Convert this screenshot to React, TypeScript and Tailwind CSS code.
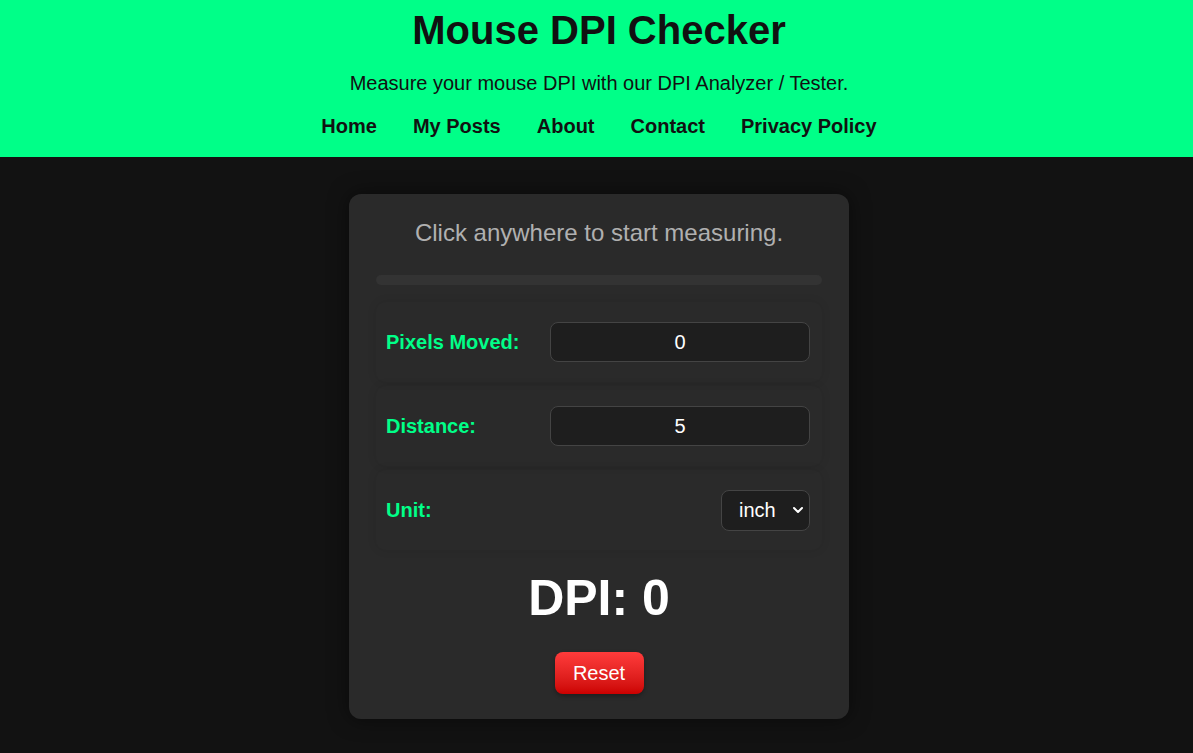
import { useState } from "react";

const font = { fontFamily: '"Liberation Sans", Arial, sans-serif' };

const navLinks = ["Home", "My Posts", "About", "Contact", "Privacy Policy"];

function Row({ label, children }: { label: string; children: React.ReactNode }) {
  return (
    <div className="flex items-center justify-between h-[80px] pl-[10px] pr-[12px] rounded-[10px] shadow-[0_0_10px_rgba(0,0,0,0.1)]">
      <span className="text-[20px] font-bold text-[#00ff88]">{label}</span>
      {children}
    </div>
  );
}

export default function App() {
  const [pixels, setPixels] = useState(0);
  const [distance, setDistance] = useState("5");
  const [unit, setUnit] = useState("inch");

  const dpi =
    pixels && Number(distance)
      ? Math.round(pixels / (unit === "inch" ? Number(distance) : Number(distance) / 2.54))
      : 0;

  return (
    <div className="min-h-screen bg-[#121212] pl-[5px]" style={font}>
      <header className="-ml-[5px] pl-[5px] bg-[#00ff88] text-[#111] text-center pt-[7px] pb-[19px]">
        <h1 className="text-[40px] leading-[46px] font-bold">Mouse DPI Checker</h1>
        <p className="mt-[19px] text-[20px] leading-[23px]">
          Measure your mouse DPI with our DPI Analyzer / Tester.
        </p>
        <nav className="mt-[20px] flex justify-center gap-[36px] text-[20px] leading-[23px] font-bold">
          {navLinks.map((l) => (
            <a key={l} href="#" className="text-[#111]">
              {l}
            </a>
          ))}
        </nav>
      </header>

      <main className="flex justify-center pt-[37px] pb-[40px]">
        <div className="w-[500px] bg-[#2a2a2a] rounded-[12px] px-[27px] pt-[25px] pb-[25px] shadow-[0_0_20px_rgba(0,0,0,0.5)]">
          <p className="text-center text-[24px] leading-[28px] text-[#b0b0b0]">
            Click anywhere to start measuring.
          </p>
          <div className="mt-[28px] h-[10px] rounded-full bg-[#333]" />

          <div className="mt-[17px] flex flex-col gap-[4px]">
            <Row label="Pixels Moved:">
              <input
                readOnly
                value={pixels}
                onChange={() => setPixels(pixels)}
                className="w-[260px] h-[40px] rounded-[8px] bg-[#1e1e1e] border border-[#444] text-white text-center text-[20px] outline-none"
              />
            </Row>
            <Row label="Distance:">
              <input
                value={distance}
                onChange={(e) => setDistance(e.target.value)}
                className="w-[260px] h-[40px] rounded-[8px] bg-[#1e1e1e] border border-[#444] text-white text-center text-[20px] outline-none"
              />
            </Row>
            <Row label="Unit:">
              <div className="relative">
                <select
                  value={unit}
                  onChange={(e) => setUnit(e.target.value)}
                  className="appearance-none w-[89px] h-[41px] rounded-[8px] bg-[#1e1e1e] border border-[#444] text-white text-[20px] pl-[17px] outline-none"
                >
                  <option value="inch">inch</option>
                  <option value="cm">cm</option>
                </select>
                <svg
                  className="absolute right-[6px] top-1/2 -translate-y-1/2 pointer-events-none"
                  width="12"
                  height="12"
                  viewBox="0 0 12 12"
                >
                  <path d="M2 4l4 4 4-4" fill="none" stroke="white" strokeWidth="2" strokeLinecap="round" strokeLinejoin="round" />
                </svg>
              </div>
            </Row>
          </div>

          <div className="mt-[20px] text-center text-white font-bold text-[50px] leading-[57px]">
            DPI: {dpi}
          </div>

          <div className="mt-[25px] flex justify-center">
            <button
              onClick={() => setPixels(0)}
              className="w-[89px] h-[42px] rounded-[8px] bg-gradient-to-b from-[#ff3b3b] to-[#cc0000] text-white text-[20px] shadow-[0_2px_4px_rgba(0,0,0,0.3)]"
            >
              Reset
            </button>
          </div>
        </div>
      </main>
    </div>
  );
}
